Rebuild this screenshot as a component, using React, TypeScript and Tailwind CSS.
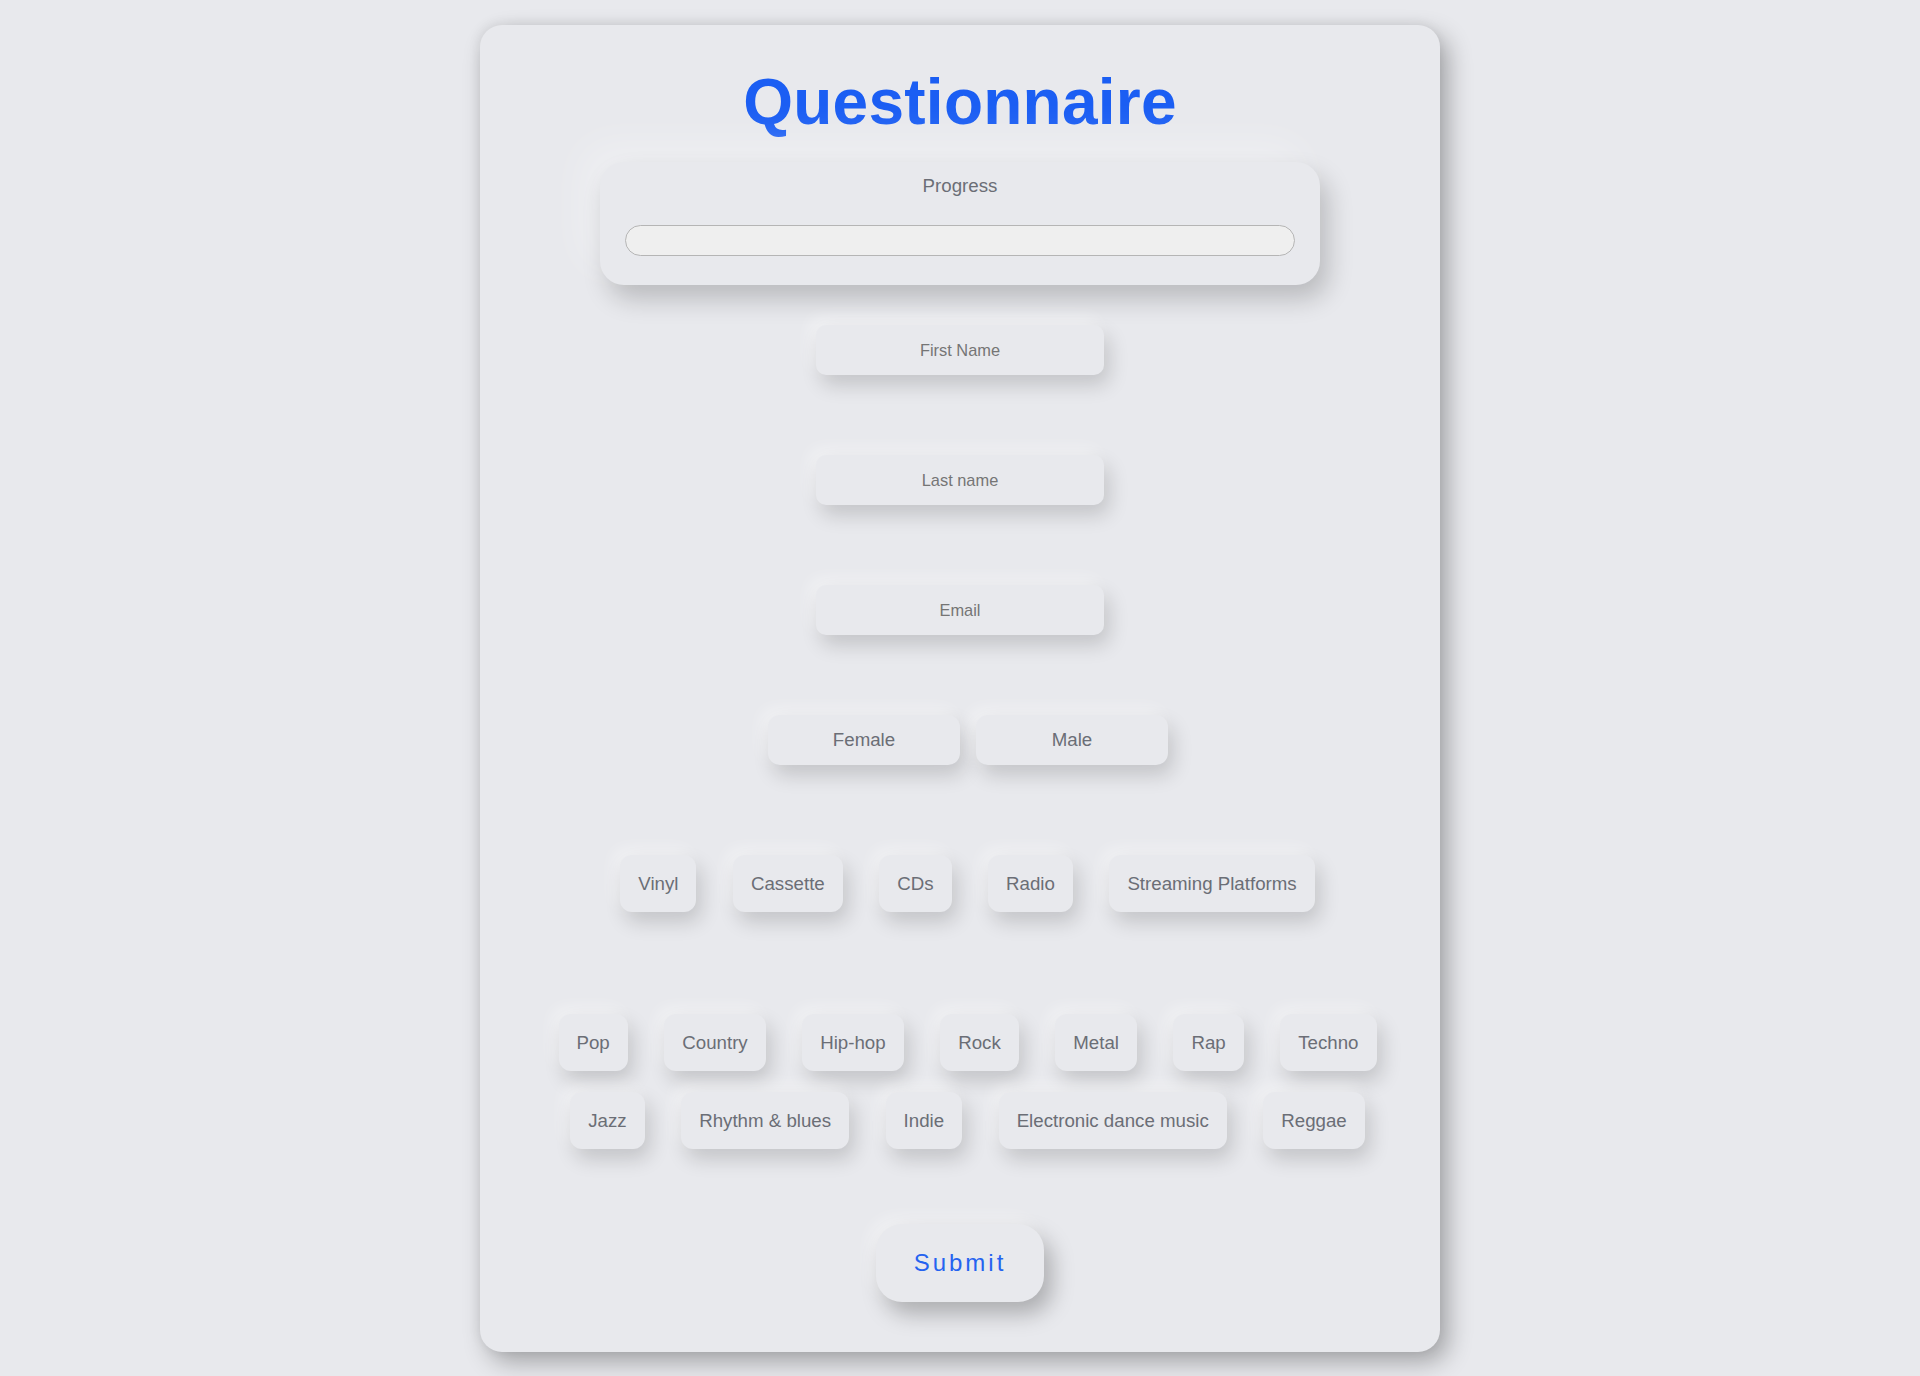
import React from "react";

const media = ["Vinyl", "Cassette", "CDs", "Radio", "Streaming Platforms"];
const genres1 = ["Pop", "Country", "Hip-hop", "Rock", "Metal", "Rap", "Techno"];
const genres2 = ["Jazz", "Rhythm & blues", "Indie", "Electronic dance music", "Reggae"];

function Chip({ label }: { label: string }) {
  return (
    <button
      type="button"
      className="px-[18px] py-[18px] leading-[21px] text-[18.7px] text-[#6b6e76] bg-[#e8e9ed] rounded-[12px] shadow-[5px_10px_20px_rgba(0,0,0,0.16),-6px_-6px_16px_rgba(255,255,255,0.45)] whitespace-nowrap"
    >
      {label}
    </button>
  );
}

function Field({ placeholder }: { placeholder: string }) {
  return (
    <input
      type="text"
      placeholder={placeholder}
      className="w-[288px] h-[50px] rounded-[10px] bg-[#e8e9ed] text-center text-[16.4px] text-[#555] placeholder:text-[#757575] outline-none border-0 shadow-[5px_10px_20px_rgba(0,0,0,0.16),-6px_-6px_16px_rgba(255,255,255,0.45)]"
    />
  );
}

export default function App() {
  return (
    <div
      className="min-h-[1376px] w-full bg-[#e8e9ed] pt-[25px] pb-[24px]"
      style={{ fontFamily: '"Liberation Sans", Arial, Helvetica, sans-serif' }}
    >
      <div className="mx-auto w-[960px] rounded-[22px] bg-[#e8e9ed] shadow-[8px_10px_24px_rgba(0,0,0,0.3),-2px_-2px_12px_rgba(0,0,0,0.06)] flex flex-col items-center pt-[40px] pb-[50px]">
        <h1 className="text-[64px] leading-[74px] font-bold tracking-[0.25px] text-[#1b5ef3]">Questionnaire</h1>

        <div className="mt-[23px] w-[720px] h-[123px] rounded-[24px] bg-[#e8e9ed] px-[25px] pt-[12px] shadow-[8px_14px_26px_rgba(0,0,0,0.2),-18px_-18px_40px_rgba(255,255,255,0.3)]">
          <div className="text-center text-[18.7px] leading-[24px] text-[#6b6e76]">Progress</div>
          <div className="mt-[27px] h-[31px] w-full rounded-full border border-[#b5b5b5] bg-[#efefef]"></div>
        </div>

        <div className="mt-[40px]">
          <Field placeholder="First Name" />
        </div>
        <div className="mt-[80px]">
          <Field placeholder="Last name" />
        </div>
        <div className="mt-[80px]">
          <Field placeholder="Email" />
        </div>

        <div className="mt-[80px] flex">
          {["Female", "Male"].map((g) => (
            <button
              key={g}
              type="button"
              className="ml-[16px] w-[192px] h-[50px] rounded-[12px] bg-[#e8e9ed] text-[18.7px] text-[#6b6e76] shadow-[5px_10px_20px_rgba(0,0,0,0.16),-6px_-6px_16px_rgba(255,255,255,0.45)]"
            >
              {g}
            </button>
          ))}
        </div>

        <div className="mt-[90px] flex gap-[36.5px] pl-[15px]">
          {media.map((m) => (
            <Chip key={m} label={m} />
          ))}
        </div>

        <div className="mt-[102px] flex flex-col items-center gap-[21px] pl-[15px]">
          <div className="flex gap-[36.5px]">
            {genres1.map((g) => (
              <Chip key={g} label={g} />
            ))}
          </div>
          <div className="flex gap-[36.5px]">
            {genres2.map((g) => (
              <Chip key={g} label={g} />
            ))}
          </div>
        </div>

        <button
          type="button"
          className="mt-[75px] w-[168px] h-[78px] rounded-[26px] bg-[#e8e9ed] text-[24px] tracking-[3px] text-[#2563f0] shadow-[8px_12px_22px_rgba(0,0,0,0.26),-6px_-6px_16px_rgba(255,255,255,0.45)]"
        >
          Submit
        </button>
      </div>
    </div>
  );
}
